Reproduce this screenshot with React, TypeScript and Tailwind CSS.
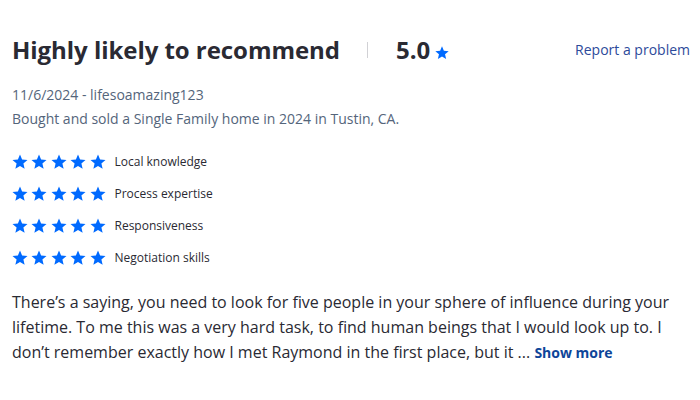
const categories = ['Local knowledge', 'Process expertise', 'Responsiveness', 'Negotiation skills']

function StarIcon({ size = 16 }: { size?: number }) {
  return (
    <svg width={size} height={size} viewBox="0 0 24 24" fill="#006aff">
      <path d="M12 17.27L18.18 21l-1.64-7.03L22 9.24l-7.19-.61L12 2 9.19 8.63 2 9.24l5.46 4.73L5.82 21z" />
    </svg>
  )
}

export default function App() {
  return (
    <div className="w-[700px] h-[400px] bg-white px-3 pt-[34px] text-[#2a2a33]" style={{ fontFamily: '"Open Sans", sans-serif' }}>
      {/* Header */}
      <div className="flex items-center h-[32px]">
        <h2 className="text-[24px] font-bold leading-none tracking-[-0.05px]">Highly likely to recommend</h2>
        <span className="ml-[27px] h-[16px] w-px bg-[#d1d1d5]" />
        <span className="ml-[28px] text-[24px] font-bold leading-none">5.0</span>
        <span className="ml-[4px] mt-[5px]">
          <StarIcon size={16} />
        </span>
        <a className="ml-auto mr-[-2px] text-[14px] text-[#2d4a9a] leading-none">Report a problem</a>
      </div>

      {/* Meta */}
      <div className="mt-[17px] text-[14px] leading-[24px] text-[#54657b]">
        <div>11/6/2024 - lifesoamazing123</div>
        <div>Bought and sold a Single Family home in 2024 in Tustin, CA.</div>
      </div>

      {/* Ratings */}
      <div className="mt-[22px] flex flex-col gap-[14px]">
        {categories.map((c) => (
          <div key={c} className="flex items-center h-[18px]">
            <div className="flex gap-[1.5px] ml-[-1.5px]">
              {[0, 1, 2, 3, 4].map((i) => (
                <StarIcon key={i} size={18} />
              ))}
            </div>
            <span className="ml-[8px] text-[12px] text-[#2a2a33]">{c}</span>
          </div>
        ))}
      </div>

      {/* Body */}
      <p className="mt-[23px] text-[16px] leading-[25px] w-[678px]">
        There’s a saying, you need to look for five people in your sphere of influence during your lifetime. To me this was a very hard task, to find human beings that I would look up to. I don’t remember exactly how I met Raymond in the first place, but it ...{' '}
        <a className="font-bold text-[14px] text-[#0d4599]">Show more</a>
      </p>
    </div>
  )
}
